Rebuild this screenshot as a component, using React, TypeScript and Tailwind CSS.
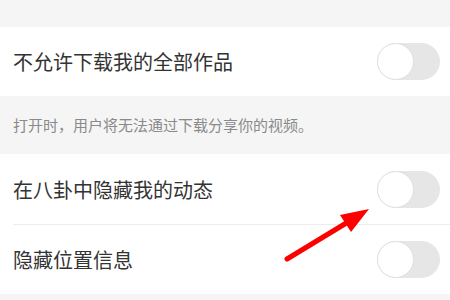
import React from 'react'

const font = { fontFamily: '"Noto Sans CJK SC", "Noto Sans", sans-serif' }

function Toggle() {
  return (
    <div className="relative h-[37px] w-[63px] rounded-full bg-[#e6e6e6]">
      <div className="absolute left-0 top-0 h-[37px] w-[37px] rounded-full border border-[#e0e0e0] bg-white" />
    </div>
  )
}

function Row({ label, divider }: { label: string; divider?: boolean }) {
  return (
    <div className="flex h-[69px] items-center justify-between bg-white pl-[13px] pr-[10px]">
      <span className="text-[20px] leading-none text-[#333333]">{label}</span>
      <Toggle />
    </div>
  )
}

export default function App() {
  return (
    <div className="relative h-[300px] w-[450px] overflow-hidden bg-[#f5f5f5]" style={font}>
      <div className="h-[27px]" />
      <Row label="不允许下载我的全部作品" />
      <div className="flex h-[58px] items-center px-[13px] pb-[1px]">
        <span className="text-[15px] leading-none text-[#8a8a8a]">打开时，用户将无法通过下载分享你的视频。</span>
      </div>
      <div className="bg-white">
        <div className="h-[1px]" />
        <Row label="在八卦中隐藏我的动态" />
        <div className="ml-[13px] h-[1px] bg-[#ededed]" />
        <Row label="隐藏位置信息" />
      </div>
      <svg className="absolute left-0 top-0" width="450" height="300" viewBox="0 0 450 300">
        <line x1="287" y1="259" x2="348" y2="222" stroke="#ff0000" strokeWidth="5" strokeLinecap="round" />
        <polygon points="369,209 340,215 351,232" fill="#ff0000" />
      </svg>
    </div>
  )
}
